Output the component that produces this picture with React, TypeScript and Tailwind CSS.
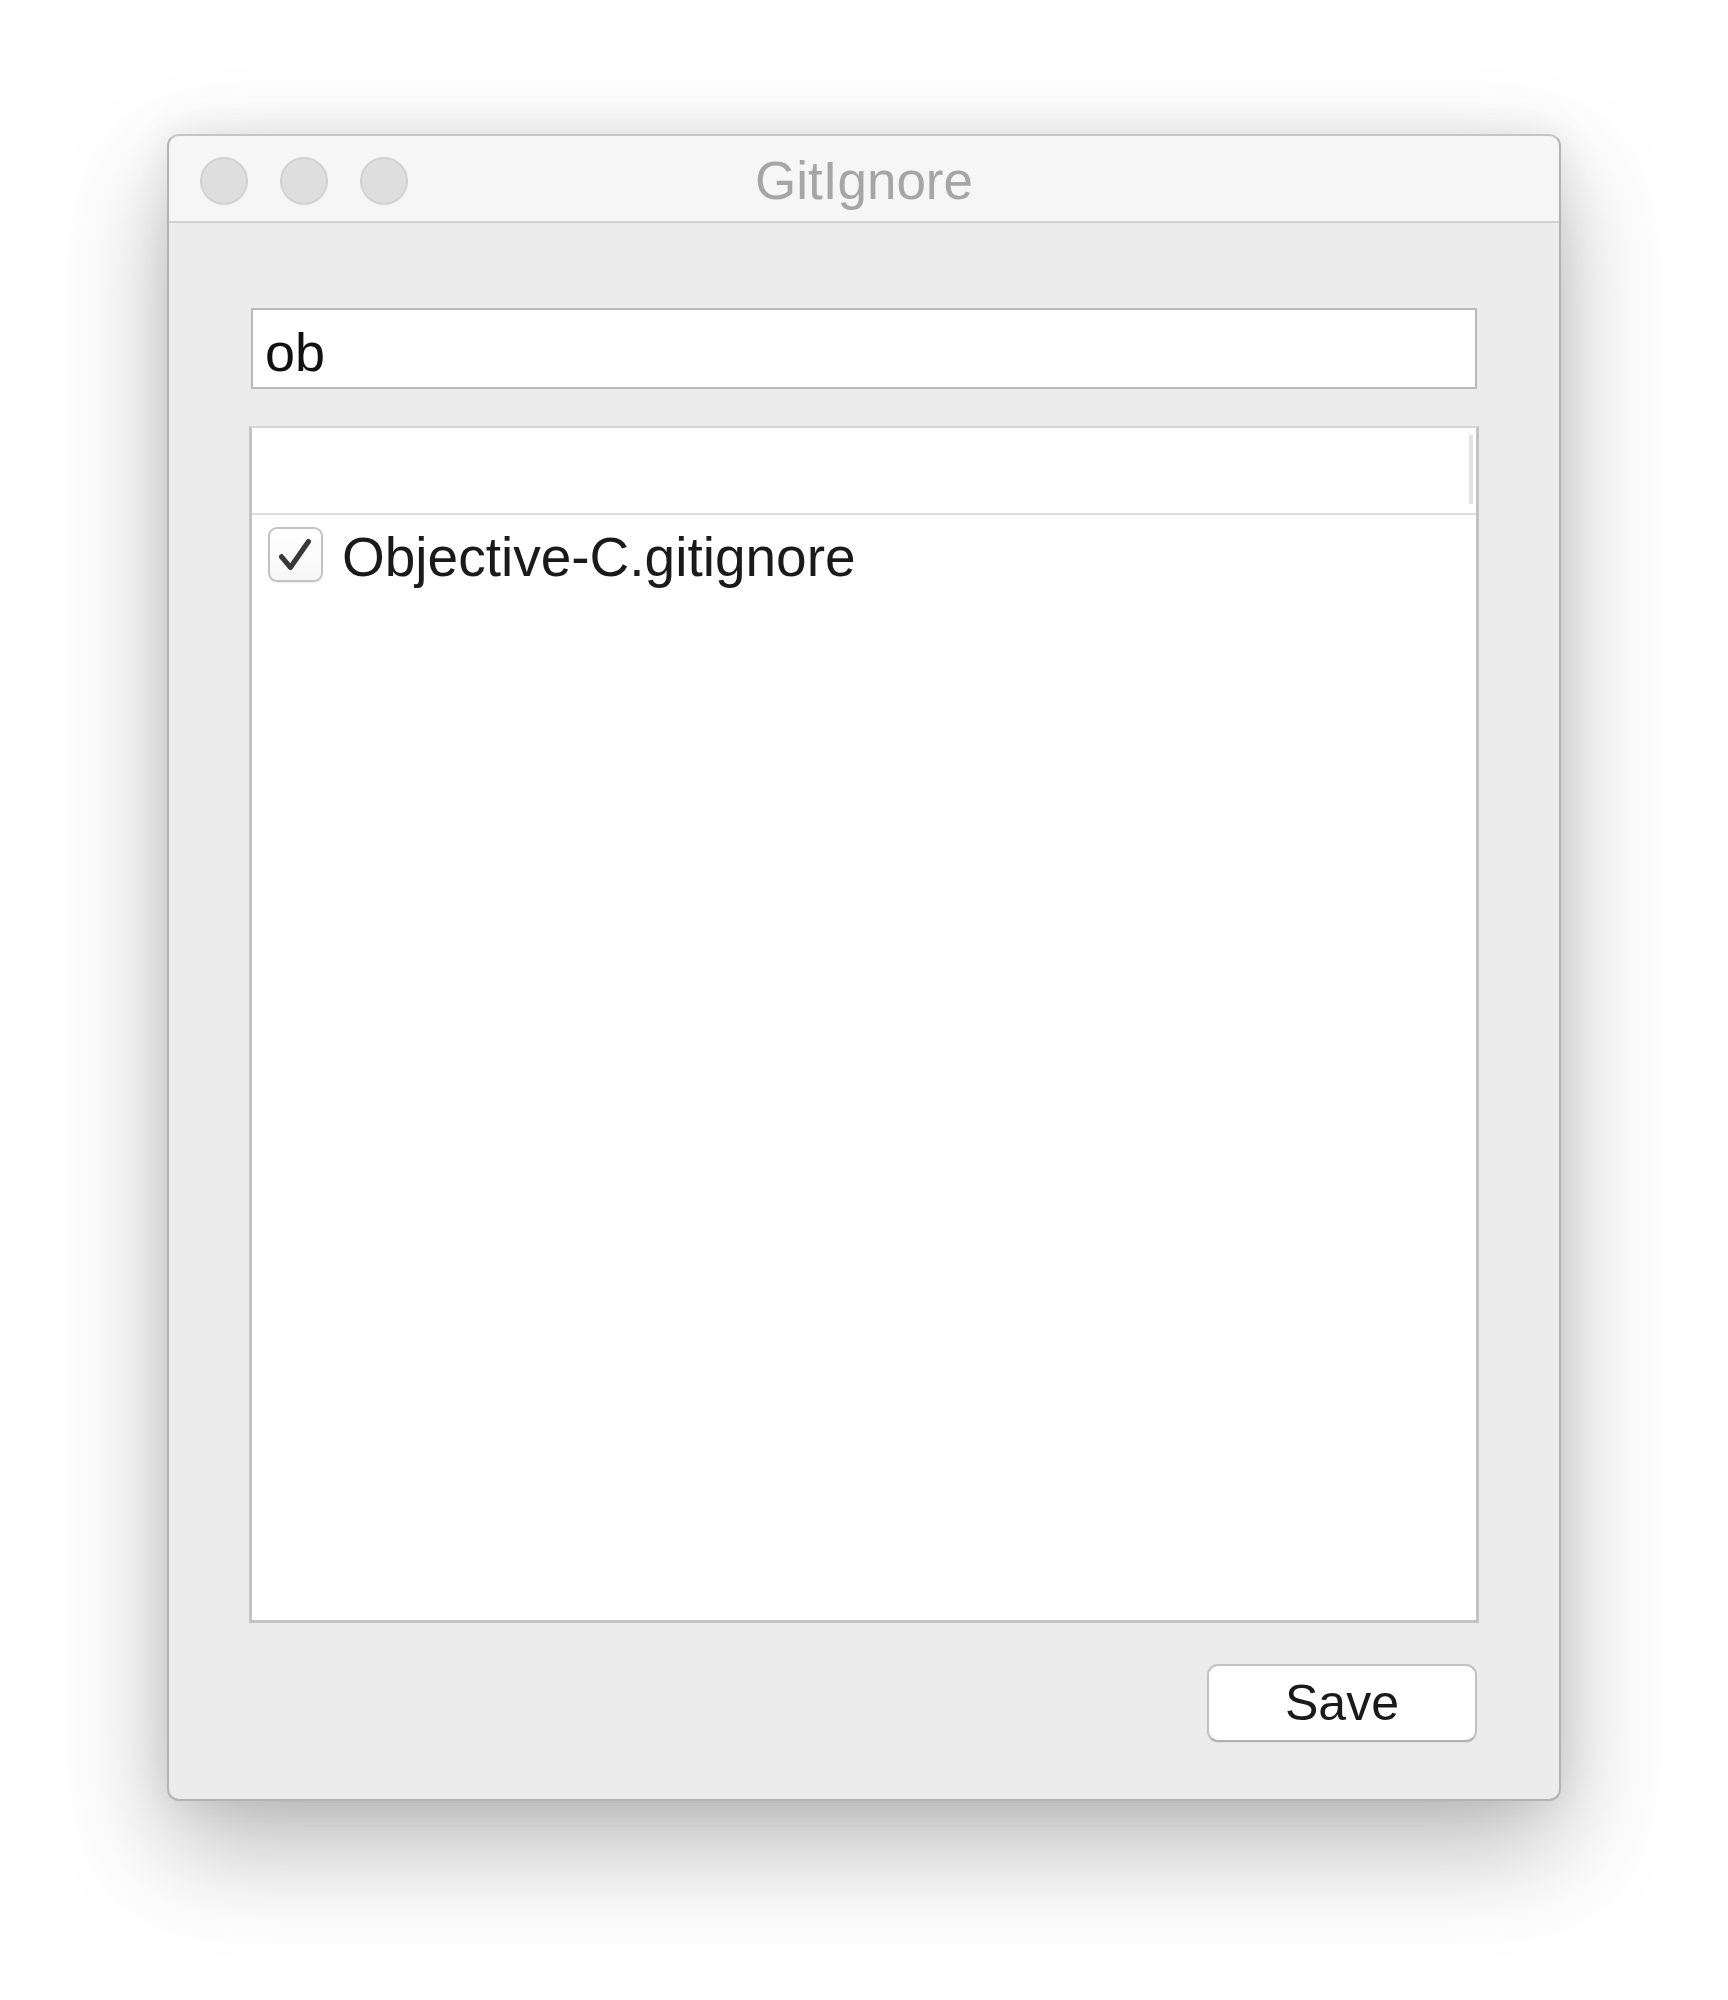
import { useState } from 'react';

const font = { fontFamily: '"Liberation Sans", Arial, sans-serif' };

function TrafficLight() {
  return <div className="h-[48px] w-[48px] rounded-full border-2 border-[#d2d2d2] bg-[#dedede]" />;
}

function CheckBox({ checked, onToggle }: { checked: boolean; onToggle: () => void }) {
  return (
    <button
      onClick={onToggle}
      className="flex h-[55px] w-[55px] shrink-0 items-center justify-center rounded-[9px] border-2 border-[#c2c2c2] bg-gradient-to-b from-white to-[#f7f7f7] shadow-[0_1px_1px_rgba(0,0,0,0.08)]"
    >
      {checked && (
        <svg width="55" height="55" viewBox="0 0 55 55">
          <path d="M12.5 30 L22 41.5 L41.5 13.5" fill="none" stroke="#383838" strokeWidth="5.5" strokeLinecap="round" strokeLinejoin="round" />
        </svg>
      )}
    </button>
  );
}

export default function App() {
  const [query, setQuery] = useState('ob');
  const [checked, setChecked] = useState(true);

  return (
    <main className="flex min-h-[2000px] justify-center bg-white pt-[134px]" style={font}>
      <div className="flex h-[1667px] w-[1394px] flex-col overflow-hidden rounded-[12px] border-2 border-[#b3b3b3] border-t-[#c6c6c6] bg-[#ececec] shadow-[0_45px_110px_rgba(0,0,0,0.28),0_0_40px_rgba(0,0,0,0.08)]">
        {/* title bar */}
        <div className="grid h-[87px] shrink-0 grid-cols-[1fr_auto_1fr] items-center border-b-2 border-[#d3d3d3] bg-[#f6f6f6] px-[31px] pt-[4px]">
          <div className="flex gap-[32px]">
            <TrafficLight />
            <TrafficLight />
            <TrafficLight />
          </div>
          <div className="text-[53px] leading-none text-[#a6a6a6]">GitIgnore</div>
          <div />
        </div>

        {/* content */}
        <div className="flex flex-1 flex-col px-[82px] pt-[85px] pb-[58px]">
          <input
            value={query}
            onChange={(e) => setQuery(e.target.value)}
            className="h-[81px] w-full border-2 border-[#bababa] bg-white pl-[12px] pt-[6px] text-[54px] leading-none text-[#111] outline-none"
            style={font}
          />

          <div className="-mx-[2px] mt-[37px] flex h-[1197px] flex-col border-[3px] border-t-2 border-[#c3c3c3] border-t-[#d6d6d6] bg-white">
            <div className="flex h-[87px] shrink-0 justify-end border-b-2 border-[#dcdcdc] pr-[3px] pt-[7px]">
              <div className="h-[69px] w-[4px] bg-[#e3e3e3]" />
            </div>
            <div className="flex items-start gap-[19px] pl-[16px] pt-[12px]">
              <CheckBox checked={checked} onToggle={() => setChecked(!checked)} />
              <span className="mt-[3px] text-[55px] leading-none text-[#1a1a1a]">Objective-C.gitignore</span>
            </div>
          </div>

          <div className="mt-[41px] flex justify-end">
            <button className="h-[78px] w-[270px] rounded-[11px] border-2 border-[#c2c2c2] border-b-[#b0b0b0] bg-white text-[50px] leading-none text-[#1a1a1a] shadow-[0_1px_1px_rgba(0,0,0,0.06)]">
              Save
            </button>
          </div>
        </div>
      </div>
    </main>
  );
}
